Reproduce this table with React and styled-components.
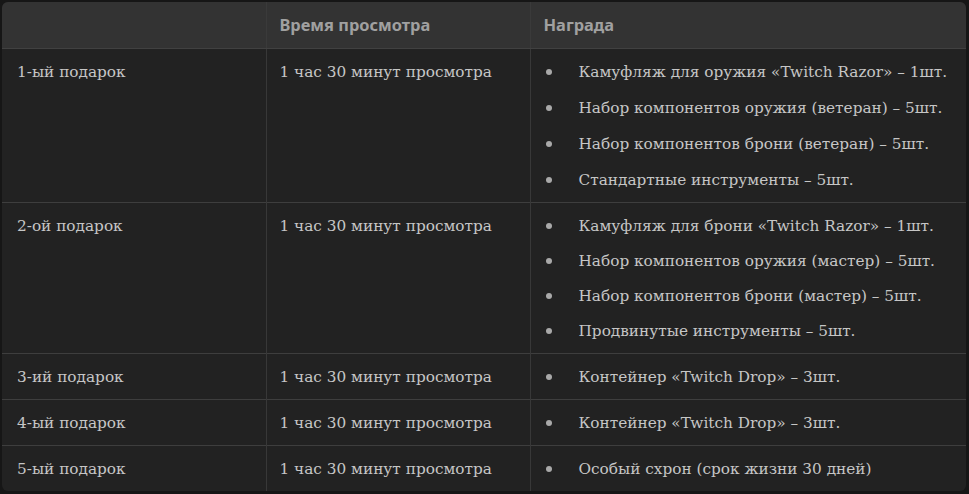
import React from "react";
import styled, { createGlobalStyle } from "styled-components";

const Global = createGlobalStyle`
  html, body { margin: 0; padding: 0; background: #161616; }
  body { width: 969px; height: 494px; overflow: hidden; }
`;

const Frame = styled.div`
  padding: 2px 3px 2px 2px;
`;

const Card = styled.div`
  border-radius: 6px;
  overflow: hidden;
  background: #222222;
`;

const Table = styled.table`
  width: 100%;
  border-collapse: collapse;
  table-layout: fixed;
`;

const HeadCell = styled.th`
  text-align: left;
  background: #333333;
  color: #a0a0a0;
  font-family: "Noto Sans", "Open Sans", sans-serif;
  font-weight: 700;
  font-size: 16.4px;
  line-height: 24px;
  padding: 11px 13px;
  border-bottom: 1px solid #414141;
  & + & { border-left: 1px solid #3a3a3a; }
`;

const Row = styled.tr`
  & + & > td { border-top: 1px solid #3e3e3e; }
`;

const Cell = styled.td`
  vertical-align: top;
  color: #c6c6c6;
  font-family: "DejaVu Serif", "Liberation Serif", serif;
  font-size: 15.3px;
  line-height: 24px;
  padding: 11px 13px 10px 13px;
  &:first-child { padding-left: 15px; }
  & + & { border-left: 1px solid #383838; }
`;

const List = styled.ul`
  margin: 0;
  padding: 0 0 0 35px;
  list-style: none;
  display: flex;
  flex-direction: column;
  gap: ${(p) => p.$gap}px;
`;

const Item = styled.li`
  position: relative;
  &::before {
    content: "";
    position: absolute;
    left: -33px;
    top: 9px;
    width: 6px;
    height: 6px;
    border-radius: 50%;
    background: #a9a9a9;
  }
`;

const rows = [
  {
    name: "1-ый подарок",
    gap: 12,
    items: [
      "Камуфляж для оружия «Twitch Razor» – 1шт.",
      "Набор компонентов оружия (ветеран) – 5шт.",
      "Набор компонентов брони (ветеран) – 5шт.",
      "Стандартные инструменты – 5шт.",
    ],
  },
  {
    name: "2-ой подарок",
    gap: 11,
    items: [
      "Камуфляж для брони «Twitch Razor» – 1шт.",
      "Набор компонентов оружия (мастер) – 5шт.",
      "Набор компонентов брони (мастер) – 5шт.",
      "Продвинутые инструменты – 5шт.",
    ],
  },
  { name: "3-ий подарок", gap: 11, items: ["Контейнер «Twitch Drop» – 3шт."] },
  { name: "4-ый подарок", gap: 11, items: ["Контейнер «Twitch Drop» – 3шт."] },
  { name: "5-ый подарок", gap: 11, items: ["Особый схрон (срок жизни 30 дней)"] },
];

export default function App() {
  return (
    <>
      <Global />
      <Frame>
        <Card>
          <Table>
            <colgroup>
              <col style={{ width: 264 }} />
              <col style={{ width: 264 }} />
              <col />
            </colgroup>
            <thead>
              <tr>
                <HeadCell></HeadCell>
                <HeadCell>Время просмотра</HeadCell>
                <HeadCell>Награда</HeadCell>
              </tr>
            </thead>
            <tbody>
              {rows.map((r) => (
                <Row key={r.name}>
                  <Cell>{r.name}</Cell>
                  <Cell>1 час 30 минут просмотра</Cell>
                  <Cell>
                    <List $gap={r.gap}>
                      {r.items.map((it) => (
                        <Item key={it}>{it}</Item>
                      ))}
                    </List>
                  </Cell>
                </Row>
              ))}
            </tbody>
          </Table>
        </Card>
      </Frame>
    </>
  );
}
